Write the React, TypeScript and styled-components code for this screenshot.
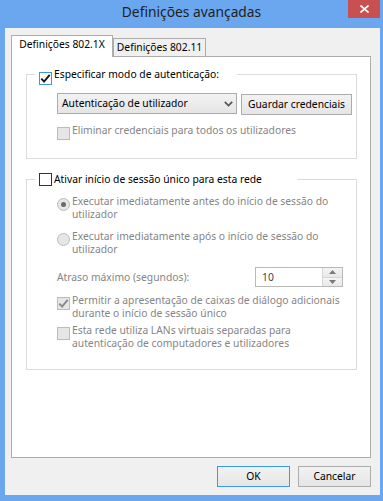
import React from 'react';
import styled, { createGlobalStyle } from 'styled-components';

const GlobalStyle = createGlobalStyle`
  html, body {
    margin: 0;
    padding: 0;
    background: #6aa7ee;
  }
  body {
    font-family: "Noto Sans", "Open Sans", sans-serif;
    font-size: 10.3px;
    line-height: 13px;
    color: #000;
  }
`;

const Window = styled.div`
  width: 383px;
  height: 501px;
  display: flex;
  flex-direction: column;
  background: #6aa7ee;
`;

const TitleBar = styled.div`
  height: 28px;
  flex: none;
  display: grid;
  grid-template-columns: 1fr auto 1fr;
`;

const Title = styled.div`
  grid-column: 2;
  padding-top: 3px;
  font-size: 13.8px;
  line-height: 18px;
  color: #1f1f1f;
`;

const CloseButton = styled.div`
  grid-column: 3;
  justify-self: end;
  align-self: start;
  width: 32px;
  height: 18px;
  margin-right: 3px;
  background: #c75050;
  display: flex;
  align-items: center;
  justify-content: center;
`;

const Client = styled.div`
  flex: 1;
  margin: 0 3px 6px 5px;
  padding: 7px 9px 8px 6px;
  background: #f0f0f0;
  display: flex;
  flex-direction: column;
`;

const TabStrip = styled.div`
  height: 21px;
  flex: none;
  display: flex;
  align-items: flex-end;
  position: relative;
  z-index: 1;
`;

const Tab = styled.div<{ $active?: boolean; $width: number }>`
  box-sizing: border-box;
  width: ${p => p.$width}px;
  height: ${p => (p.$active ? 22 : 18)}px;
  margin-bottom: ${p => (p.$active ? -1 : 0)}px;
  padding-top: 2px;
  border: 1px solid #acacac;
  border-bottom: none;
  background: ${p => (p.$active ? '#fff' : '#f0f0f0')};
  text-align: center;
  white-space: nowrap;
`;

const Panel = styled.div`
  height: 402px;
  flex: none;
  box-sizing: border-box;
  border: 1px solid #acacac;
  background: #fff;
  display: flex;
  flex-direction: column;
`;

const Group = styled.fieldset<{ $top: number }>`
  margin: ${p => p.$top}px 0 0 14px;
  width: 331px;
  box-sizing: border-box;
  padding: 0;
  min-width: 0;
  border: 1px solid #dcdcdc;
`;

const Legend = styled.legend<{ $width: number }>`
  margin-left: 8px;
  padding: 0 0 0 4px;
  width: ${p => p.$width}px;
  box-sizing: border-box;
  height: 14px;
  line-height: 14px;
`;

const LegendRow = styled.div`
  display: flex;
  align-items: flex-start;
  height: 14px;
`;

const GroupBody = styled.div<{ $top: number; $bottom: number }>`
  padding: ${p => p.$top}px 0 ${p => p.$bottom}px 30px;
  display: flex;
  flex-direction: column;
  align-items: flex-start;
`;

type BoxState = 'focus' | 'normal' | 'disabled';

const boxBorder = { focus: '#3d95ea', normal: '#333333', disabled: '#bcbcbc' };

const Box = styled.span<{ $state: BoxState; $drop?: number; $round?: boolean }>`
  flex: none;
  width: 13px;
  height: 13px;
  box-sizing: border-box;
  margin-top: ${p => p.$drop ?? 0}px;
  border: 1px solid ${p => boxBorder[p.$state]};
  border-radius: ${p => (p.$round ? '50%' : '0')};
  background: ${p => (p.$state === 'disabled' ? '#e6e6e6' : '#fff')};
  display: flex;
  align-items: center;
  justify-content: center;
`;

const Dot = styled.span`
  width: 5px;
  height: 5px;
  border-radius: 50%;
  background: #6a6a6a;
`;

const LegendText = styled.span`
  margin-left: 2px;
  white-space: nowrap;
`;

const Option = styled.div<{ $top: number }>`
  display: flex;
  align-items: flex-start;
  margin-top: ${p => p.$top}px;
`;

const OptionText = styled.span<{ $disabled?: boolean }>`
  margin: -3px 0 0 2px;
  color: ${p => (p.$disabled ? '#858585' : '#000')};
  white-space: nowrap;
`;

const ComboRow = styled.div`
  display: flex;
  align-items: flex-start;
`;

const Combo = styled.div`
  box-sizing: border-box;
  width: 180px;
  height: 21px;
  padding-left: 4px;
  border: 1px solid #acacac;
  background: linear-gradient(#f2f2f2, #e5e5e5);
  display: flex;
  align-items: center;
`;

const Chevron = styled.svg`
  margin-left: auto;
  margin-right: 3px;
`;

const Button = styled.div<{ $width: number; $default?: boolean; $top?: number }>`
  box-sizing: border-box;
  width: ${p => p.$width}px;
  height: 21px;
  margin-top: ${p => p.$top ?? 0}px;
  border: 1px solid ${p => (p.$default ? '#3c97ef' : '#acacac')};
  background: linear-gradient(#f2f2f2, #e5e5e5);
  display: flex;
  align-items: center;
  justify-content: center;
  white-space: nowrap;
`;

const DelayRow = styled.div`
  width: 286px;
  margin-top: 11px;
  display: flex;
  align-items: center;
  justify-content: space-between;
`;

const DelayLabel = styled.span`
  color: #858585;
`;

const SpinBox = styled.div`
  box-sizing: border-box;
  width: 88px;
  height: 20px;
  border: 1px solid #b9b9b9;
  background: #fff;
  display: flex;
  align-items: center;
`;

const SpinValue = styled.span`
  flex: 1;
  padding-left: 6px;
  color: #444;
`;

const Spinner = styled.div`
  width: 20px;
  height: 18px;
  display: flex;
  flex-direction: column;
  border-left: 1px solid #d6d6d6;
  box-sizing: border-box;
`;

const SpinHalf = styled.div<{ $down?: boolean }>`
  flex: 1;
  display: flex;
  align-items: center;
  justify-content: center;
  background: linear-gradient(#f4f4f4, #e8e8e8);
  border-top: ${p => (p.$down ? '1px solid #d6d6d6' : 'none')};
`;

const ButtonRow = styled.div`
  margin-top: 8px;
  display: flex;
  justify-content: flex-end;
  gap: 8px;
`;

function Check({ color }: { color: string }) {
  return (
    <svg width="11" height="11" viewBox="0 0 11 11">
      <path d="M1.3 5.6 L4.1 8.6 L9.7 1.9" fill="none" stroke={color} strokeWidth="2" />
    </svg>
  );
}

function Arrow({ down }: { down?: boolean }) {
  return (
    <svg width="7" height="4" viewBox="0 0 7 4">
      <path d={down ? 'M0 0 H7 L3.5 4 Z' : 'M0 4 H7 L3.5 0 Z'} fill="#7a7a7a" />
    </svg>
  );
}

function App() {
  return (
    <Window>
      <GlobalStyle />
      <TitleBar>
        <Title>Definições avançadas</Title>
        <CloseButton>
          <svg width="9" height="8" viewBox="0 0 9 8">
            <path d="M0.5 0.5 L8.5 7.5 M8.5 0.5 L0.5 7.5" stroke="#fff" strokeWidth="1.6" />
          </svg>
        </CloseButton>
      </TitleBar>
      <Client>
        <TabStrip>
          <Tab $active $width={102}>Definições 802.1X</Tab>
          <Tab $width={93}>Definições 802.11</Tab>
        </TabStrip>
        <Panel>
          <Group $top={10}>
            <Legend $width={202}>
              <LegendRow>
                <Box $state="focus" $drop={5}><Check color="#1a1a1a" /></Box>
                <LegendText>Especificar modo de autenticação:</LegendText>
              </LegendRow>
            </Legend>
            <GroupBody $top={12} $bottom={18}>
              <ComboRow>
                <Combo>
                  Autenticação de utilizador
                  <Chevron width="9" height="6" viewBox="0 0 9 6">
                    <path d="M0.8 0.8 L4.5 4.5 L8.2 0.8" fill="none" stroke="#555" strokeWidth="1.7" />
                  </Chevron>
                </Combo>
                <Button $width={111} $top={1} style={{ marginLeft: 4 }}>Guardar credenciais</Button>
              </ComboRow>
              <Option $top={12}>
                <Box $state="disabled" />
                <OptionText $disabled>Eliminar credenciais para todos os utilizadores</OptionText>
              </Option>
            </GroupBody>
          </Group>

          <Group $top={13}>
            <Legend $width={262}>
              <LegendRow>
                <Box $state="normal" $drop={1} />
                <LegendText>Ativar início de sessão único para esta rede</LegendText>
              </LegendRow>
            </Legend>
            <GroupBody $top={12} $bottom={19}>
              <Option $top={0}>
                <Box $state="disabled" $round><Dot /></Box>
                <OptionText $disabled>
                  Executar imediatamente antes do início de sessão do<br />utilizador
                </OptionText>
              </Option>
              <Option $top={12}>
                <Box $state="disabled" $round />
                <OptionText $disabled>
                  Executar imediatamente após o início de sessão do<br />utilizador
                </OptionText>
              </Option>
              <DelayRow>
                <DelayLabel>Atraso máximo (segundos):</DelayLabel>
                <SpinBox>
                  <SpinValue>10</SpinValue>
                  <Spinner>
                    <SpinHalf><Arrow /></SpinHalf>
                    <SpinHalf $down><Arrow down /></SpinHalf>
                  </Spinner>
                </SpinBox>
              </DelayRow>
              <Option $top={10}>
                <Box $state="disabled"><Check color="#8a8a8a" /></Box>
                <OptionText $disabled>
                  Permitir a apresentação de caixas de diálogo adicionais<br />durante o início de sessão único
                </OptionText>
              </Option>
              <Option $top={7}>
                <Box $state="disabled" />
                <OptionText $disabled>
                  Esta rede utiliza LANs virtuais separadas para<br />autenticação de computadores e utilizadores
                </OptionText>
              </Option>
            </GroupBody>
          </Group>
        </Panel>
        <ButtonRow>
          <Button $width={73} $default>OK</Button>
          <Button $width={73}>Cancelar</Button>
        </ButtonRow>
      </Client>
    </Window>
  );
}

export default App;
